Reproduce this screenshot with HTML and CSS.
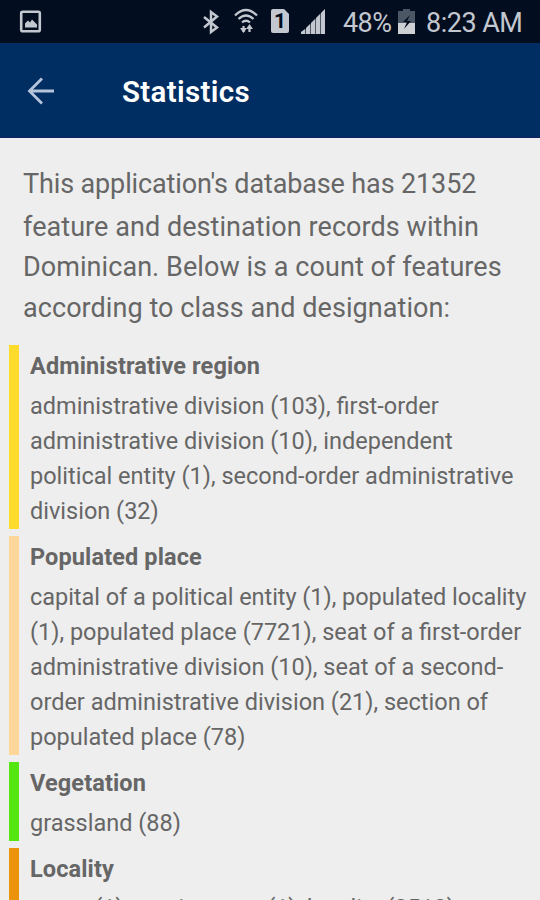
FILE: index.html
```
<!DOCTYPE html>
<html lang="en">
<head>
<meta charset="utf-8">
<title>Statistics</title>
<link rel="stylesheet" href="styles.css">
</head>
<body>
<div class="status">
  <svg class="icons" width="340" height="43" viewBox="0 0 340 43" fill="none" stroke="#c3c7cf">
    <rect x="21.2" y="11.7" width="18.6" height="19.6" rx="1.5" stroke-width="2.6"/>
    <path d="M25 27.500v-4l3-3 2 2 2-3 2 2 3 3v3z" fill="#c3c7cf" stroke="none"/>
    <path d="M204 17l13 10.500L211 32V12l6 4.500L204 27.500" stroke-width="2.500"/>
    <path d="M235 15.500q11-11 22 0M238.500 19q7.500-7 15 0M242 22.500q4-3.500 8 0" stroke-width="2.300"/>
    <path d="M243.500 32v-6M249.500 26v6" stroke-width="2.200"/>
    <path d="M240 28l3.500 5 3.500-5zM246 29l3.500-5 3.500 5z" fill="#c3c7cf" stroke="none"/>
    <path d="M273 9h11l5 5v17q0 2-2 2h-14q-2 0-2-2V11q0-2 2-2z" fill="#c3c7cf" stroke="none"/>
    <path d="M301 34v-2l4-3v5zM306 34v-6l4-4v10zM311 34V23l4-4v15zM316 34V18l4-4v20zM321 34V13l4-4v25z" fill="#c3c7cf" stroke="none"/>
    <path d="M301 34L325 9v25z" fill="#c3c7cf" fill-opacity=".4" stroke="none"/>
  </svg>
  <span class="sim">1</span>
  <span class="percent">48%</span>
  <svg class="battery" width="18" height="25" viewBox="0 0 18 25">
    <path d="M0 2h5V0h7v2h5v12H0z" fill="#4c5765"/>
    <path d="M0 14h17v11H0z" fill="#cfd0d3"/>
    <path d="M12 6L5 13h4l-3 7 7-8H9z" fill="#020c1c"/>
  </svg>
  <span class="clock">8:23 AM</span>
</div>
<header class="bar">
  <svg class="back" width="28" height="28" viewBox="0 0 28 28" fill="none" stroke="#b6c4da" stroke-width="2.8"><path d="M28.500 14H3.500M16 1.500L3.500 14 16 26.500"/></svg>
  <h1 class="title">Statistics</h1>
</header>
<main class="content">
  <p class="intro"><span class="first">This application's database has 21352</span>feature and destination records within<br>Dominican. Below is a count of features<br>according to class and designation:</p>
  <section class="group admin">
    <h2>Administrative region</h2>
    <p>administrative division (103), first-order<br>administrative division (10), independent<br>political entity (1), second-order administrative<br>division (32)</p>
  </section>
  <section class="group populated">
    <h2>Populated place</h2>
    <p><span class="snug">capital of a political entity (1), populated locality</span><br>(1), populated place (7721), seat of a first-order<br>administrative division (10), seat of a second-<br>order administrative division (21), section of<br>populated place (78)</p>
  </section>
  <section class="group vegetation">
    <h2>Vegetation</h2>
    <p>grassland (88)</p>
  </section>
  <section class="group locality">
    <h2>Locality</h2>
    <p>camp (1), grazing area (1), locality (2518)</p>
  </section>
</main>
</body>
</html>
```
FILE: styles.css
```
* { box-sizing: border-box; }
body {
  margin: 0;
  width: 540px;
  height: 900px;
  overflow: hidden;
  background: #eee;
  color: #666;
  font-family: Roboto, sans-serif;
}
.status {
  position: relative;
  display: flex;
  height: 43px;
  background: #020d20;
  color: #c3c7cf;
  font-size: 27px;
  line-height: 46px;
  white-space: nowrap;
}
.icons { flex: none; }
.sim {
  position: absolute;
  left: 274px;
  top: 10px;
  color: #020d20;
  font-size: 21px;
  font-weight: 700;
  line-height: 23px;
}
.percent { width: 48px; margin-left: 3px; letter-spacing: -0.6px; }
.battery { flex: none; margin: 9px 0 0 7px; }
.clock { margin-left: 10px; letter-spacing: -0.5px; }
.bar {
  display: flex;
  align-items: center;
  height: 95px;
  padding-left: 26px;
  background: #002d62;
  border-bottom: 1px solid #1b1e61;
  color: #fff;
}
.back { margin-top: 1px; }
.title {
  margin: 3px 0 0 68px;
  font-size: 29.5px;
  font-weight: 600;
  letter-spacing: 0.35px;
  line-height: 40px;
}
.content { padding: 26px 0 0 9px; }
.intro {
  height: 181px;
  margin: 0;
  padding-left: 14px;
  font-size: 27px;
  line-height: 40.7px;
  letter-spacing: 0.06px;
  white-space: nowrap;
}
.first { display: block; margin-bottom: 2px; letter-spacing: -0.13px; }
.group {
  height: 184px;
  margin-bottom: 7px;
  padding: 3px 0 0 11px;
  border-left: 10px solid #ffdb2b;
  font-size: 23.5px;
  white-space: nowrap;
}
.group h2 {
  margin: 0;
  font-size: 23.5px;
  font-weight: 700;
  letter-spacing: 0.12px;
  line-height: 36px;
}
.group p {
  margin: 5px 0 0;
  line-height: 35.1px;
}
.snug { letter-spacing: -0.04px; }
.populated { height: 219px; border-color: #ffd699; }
.vegetation { height: 79px; border-color: #55e612; }
.locality { height: 79px; border-color: #ea930b; }
.locality p { margin-top: 4px; letter-spacing: -0.08px; }
```
